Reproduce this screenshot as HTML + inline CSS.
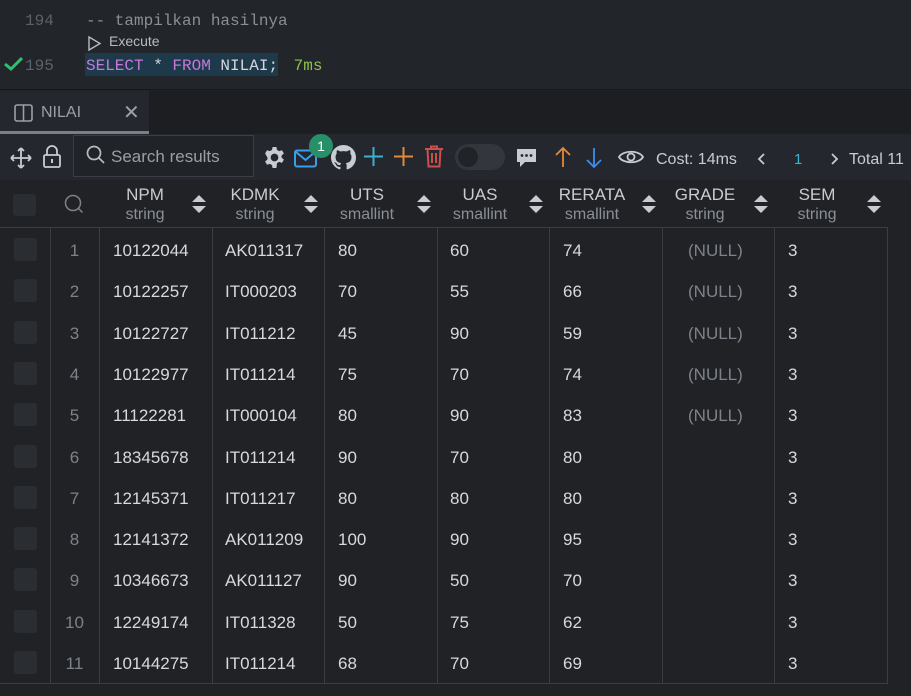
<!DOCTYPE html>
<html><head><meta charset="utf-8"><style>
*{margin:0;padding:0;box-sizing:border-box}
body{width:911px;height:696px;overflow:hidden;background:#202226;font-family:"Liberation Sans",sans-serif;position:relative;color:#d4d7dc}
.a{position:absolute}
.mono{font-family:"Liberation Mono",monospace;font-size:16px}
.cell{position:absolute;font-size:17px;color:#d6d9de;white-space:nowrap}
.vl{position:absolute;width:1px;background:#3a3d43;top:228px;height:456px}
.hd{position:absolute;text-align:center;line-height:20px}
.hd b{display:block;font-weight:normal;font-size:17px;color:#c8ccd2}
.hd i{display:block;font-style:normal;font-size:16px;color:#8a8f97}
.sort{position:absolute;width:14px;height:18px}
.chk{position:absolute;left:14px;width:23px;height:23px;background:#2a2d32;border-radius:3px}
</style></head><body>
<div class="a" style="left:0;top:0;width:911px;height:90px;background:#22252a;border-bottom:1px solid #16181b"></div>
<div class="a mono" style="left:25px;top:-13px;color:#555a62">193</div>
<div class="a mono" style="left:25px;top:12px;color:#5d626a">194</div>
<div class="a mono" style="left:86px;top:12px;color:#8a8f97">-- tampilkan hasilnya</div>
<svg class="a" style="left:87px;top:35px" width="16" height="17"><path d="M2 2 L13 8.5 L2 15 Z" fill="none" stroke="#b8bcc2" stroke-width="1.4"/></svg>
<div class="a" style="left:109px;top:33px;font-size:14px;color:#b8bcc2">Execute</div>
<svg class="a" style="left:3px;top:56px" width="20" height="16"><path d="M2 8 L8 13 L19 2" fill="none" stroke="#2fbf71" stroke-width="3"/></svg>
<div class="a mono" style="left:25px;top:57px;color:#5d626a">195</div>
<div class="a" style="left:85px;top:53px;width:193px;height:23px;background:#1e3a4a"></div>
<div class="a mono" style="left:86px;top:57px;color:#d4d7dc"><span style="color:#c678dd">SELECT</span> * <span style="color:#c678dd">FROM</span> NILAI; <span style="color:#8bc34a;margin-left:6px">7ms</span></div>
<div class="a" style="left:0;top:91px;width:911px;height:43px;background:#1c1e22"></div>
<div class="a" style="left:0;top:91px;width:149px;height:43px;background:#24272d;border-bottom:3px solid #7a7e85"></div>
<svg class="a" style="left:14px;top:104px" width="20" height="18"><rect x="1" y="1" width="17" height="16" rx="2" fill="none" stroke="#9aa0a8" stroke-width="1.6"/><line x1="9.5" y1="1" x2="9.5" y2="17" stroke="#9aa0a8" stroke-width="1.6"/></svg>
<div class="a" style="left:41px;top:104px;font-size:16px;color:#9aa0a8">NILAI</div>
<div class="a" style="left:123px;top:100px;font-size:20px;color:#9aa0a8">✕</div>
<div class="a" style="left:0;top:134px;width:911px;height:46px;background:#24272d"></div>
<svg class="a" style="left:9px;top:146px" width="24" height="24"><path d="M12 2V22M2 12H22M12 2l-3 3M12 2l3 3M12 22l-3-3M12 22l3-3M2 12l3-3M2 12l3 3M22 12l-3-3M22 12l-3 3" stroke="#c8ccd2" stroke-width="1.8" fill="none"/></svg>
<svg class="a" style="left:42px;top:144px" width="20" height="24"><path d="M5 11V7a5 5 0 0 1 10 0v4" fill="none" stroke="#c8ccd2" stroke-width="1.8"/><rect x="2" y="11" width="16" height="12" rx="1.5" fill="none" stroke="#c8ccd2" stroke-width="1.8"/><rect x="9" y="15" width="2" height="4" fill="#c8ccd2"/></svg>
<div class="a" style="left:73px;top:135px;width:181px;height:42px;border:1px solid #3b3e44;background:#202328"></div>
<svg class="a" style="left:86px;top:145px" width="20" height="20"><circle cx="8" cy="8" r="6.5" fill="none" stroke="#b8bcc2" stroke-width="1.7"/><path d="M13 13l5 5" stroke="#b8bcc2" stroke-width="1.7"/></svg>
<div class="a" style="left:111px;top:147px;font-size:17px;color:#9aa0a8">Search results</div>
<svg class="a" style="left:263px;top:146px" width="23" height="23" viewBox="0 0 24 24"><path fill="#c8ccd2" fill-rule="evenodd" d="M10 1h4l.6 3.1 2.2 1.3 3-1 2 3.4-2.4 2.1v2.2l2.4 2.1-2 3.4-3-1-2.2 1.3L14 23h-4l-.6-3.1-2.2-1.3-3 1-2-3.4 2.4-2.1v-2.2L2.2 7.8l2-3.4 3 1 2.2-1.3zM12 8a4 4 0 1 0 0 8 4 4 0 0 0 0-8z"/></svg>
<svg class="a" style="left:294px;top:149px" width="24" height="20"><rect x="1" y="1.5" width="21" height="16" rx="2" fill="none" stroke="#3a9ee8" stroke-width="2"/><path d="M2 3l9.5 8L21 3" fill="none" stroke="#3a9ee8" stroke-width="2"/></svg>
<div class="a" style="left:309px;top:134px;width:24px;height:24px;border-radius:12px;background:#279068;color:#fff;font-size:14px;text-align:center;line-height:24px">1</div>
<svg class="a" style="left:331px;top:145px" width="25" height="25" viewBox="0 0 16 16"><path fill="#c8ccd2" d="M8 0C3.58 0 0 3.58 0 8c0 3.54 2.29 6.53 5.47 7.59.4.07.55-.17.55-.38v-1.33c-2.23.48-2.7-1.07-2.7-1.07-.36-.92-.89-1.17-.89-1.17-.73-.5.06-.49.06-.49.8.06 1.23.83 1.23.83.72 1.22 1.87.87 2.33.66.07-.52.28-.87.5-1.07-1.78-.2-3.64-.89-3.64-3.95 0-.87.31-1.59.82-2.15-.08-.2-.36-1.02.08-2.12 0 0 .67-.21 2.2.82a7.6 7.6 0 0 1 4 0c1.53-1.04 2.2-.82 2.2-.82.44 1.1.16 1.92.08 2.12.51.56.82 1.27.82 2.15 0 3.07-1.87 3.75-3.65 3.95.29.25.54.73.54 1.48v2.2c0 .21.15.46.55.38A8.01 8.01 0 0 0 16 8c0-4.42-3.58-8-8-8z"/></svg>
<svg class="a" style="left:363px;top:146px" width="21" height="21"><path d="M10.5 1V20M1 10.5H20" stroke="#3bb0d0" stroke-width="2"/></svg>
<svg class="a" style="left:393px;top:146px" width="21" height="21"><path d="M10.5 1V20M1 10.5H20" stroke="#e08a3c" stroke-width="2"/></svg>
<svg class="a" style="left:424px;top:145px" width="20" height="23"><path d="M1 4H19M7 4V1.5h6V4M3.5 4l1 17.5h11l1-17.5M8 8v10M12 8v10" fill="none" stroke="#c9504d" stroke-width="2"/></svg>
<div class="a" style="left:455px;top:144px;width:50px;height:26px;border-radius:13px;background:#33363c"></div>
<div class="a" style="left:458px;top:147px;width:20px;height:20px;border-radius:10px;background:#202328"></div>
<svg class="a" style="left:516px;top:148px" width="21" height="20"><path d="M1 1H20V14H9L4 19V14H1Z" fill="#c8ccd2"/><circle cx="6" cy="7.5" r="1.4" fill="#24272d"/><circle cx="10.5" cy="7.5" r="1.4" fill="#24272d"/><circle cx="15" cy="7.5" r="1.4" fill="#24272d"/></svg>
<svg class="a" style="left:553px;top:146px" width="20" height="22"><path d="M10 2V21M3 9l7-7 7 7" fill="none" stroke="#e08a3c" stroke-width="1.8"/></svg>
<svg class="a" style="left:584px;top:147px" width="20" height="22"><path d="M10 1V20M3 13l7 7 7-7" fill="none" stroke="#3a8ef0" stroke-width="1.8"/></svg>
<svg class="a" style="left:618px;top:148px" width="26" height="18"><path d="M1 9C5 2 21 2 25 9C21 16 5 16 1 9Z" fill="none" stroke="#c8ccd2" stroke-width="1.8"/><circle cx="13" cy="9" r="3.5" fill="none" stroke="#c8ccd2" stroke-width="1.8"/></svg>
<div class="a" style="left:656px;top:151px;font-size:16px;color:#c8ccd2">Cost: 14ms</div>
<svg class="a" style="left:757px;top:152px" width="10" height="14"><path d="M7 2L2 7l5 5" fill="none" stroke="#c8ccd2" stroke-width="1.8"/></svg>
<div class="a" style="left:794px;top:151px;font-size:15px;color:#3bb0d0">1</div>
<svg class="a" style="left:829px;top:152px" width="10" height="14"><path d="M3 2l5 5-5 5" fill="none" stroke="#c8ccd2" stroke-width="1.8"/></svg>
<div class="a" style="left:849px;top:151px;font-size:16px;color:#c8ccd2">Total 11</div>
<div class="a" style="left:0;top:180px;width:911px;height:48px;background:#202226"></div>
<div class="a" style="left:13px;top:194px;width:23px;height:22px;background:#2a2d32;border-radius:3px"></div>
<svg class="a" style="left:64px;top:194px" width="20" height="20"><circle cx="9" cy="9" r="7.5" fill="none" stroke="#7d828a" stroke-width="1.5"/><path d="M14 14l4.5 4.5" stroke="#7d828a" stroke-width="1.5"/></svg>
<div class="a" style="left:0;top:227px;width:888px;height:1px;background:#3a3d43"></div>
<div class="a" style="left:0;top:683px;width:888px;height:1px;background:#3a3d43"></div>
<div class="vl" style="left:50px"></div><div class="vl" style="left:99px"></div><div class="vl" style="left:212px"></div><div class="vl" style="left:324px"></div><div class="vl" style="left:437px"></div><div class="vl" style="left:549px"></div><div class="vl" style="left:662px"></div><div class="vl" style="left:774px"></div><div class="vl" style="left:887px"></div>
<div class="hd" style="left:100px;top:185px;width:90px"><b>NPM</b><i>string</i></div>
<div class="hd" style="left:212px;top:185px;width:86px"><b>KDMK</b><i>string</i></div>
<div class="hd" style="left:324px;top:185px;width:86px"><b>UTS</b><i>smallint</i></div>
<div class="hd" style="left:437px;top:185px;width:86px"><b>UAS</b><i>smallint</i></div>
<div class="hd" style="left:549px;top:185px;width:86px"><b>RERATA</b><i>smallint</i></div>
<div class="hd" style="left:662px;top:185px;width:86px"><b>GRADE</b><i>string</i></div>
<div class="hd" style="left:774px;top:185px;width:86px"><b>SEM</b><i>string</i></div>
<svg width="0" height="0" style="position:absolute"><defs><g id="s"><path d="M0 7L7 0L14 7Z M0 11L14 11L7 18Z" fill="#c8ccd2"/></g></defs></svg>
<svg class="sort" style="left:192px;top:195px"><use href="#s"/></svg>
<svg class="sort" style="left:304px;top:195px"><use href="#s"/></svg>
<svg class="sort" style="left:417px;top:195px"><use href="#s"/></svg>
<svg class="sort" style="left:529px;top:195px"><use href="#s"/></svg>
<svg class="sort" style="left:642px;top:195px"><use href="#s"/></svg>
<svg class="sort" style="left:754px;top:195px"><use href="#s"/></svg>
<svg class="sort" style="left:867px;top:195px"><use href="#s"/></svg>
<div id="rows"></div>
<script>
var d=[["10122044","AK011317",80,60,74,1],["10122257","IT000203",70,55,66,1],["10122727","IT011212",45,90,59,1],["10122977","IT011214",75,70,74,1],["11122281","IT000104",80,90,83,1],["18345678","IT011214",90,70,80,0],["12145371","IT011217",80,80,80,0],["12141372","AK011209",100,90,95,0],["10346673","AK011127",90,50,70,0],["12249174","IT011328",50,75,62,0],["10144275","IT011214",68,70,69,0]];
var h="";
for(var i=0;i<d.length;i++){var y=241+i*41.3;var r=d[i];
h+='<div class="chk" style="top:'+(y-3)+'px"></div>';
h+='<div class="cell" style="left:50px;width:49px;text-align:center;color:#7d828a;top:'+y+'px">'+(i+1)+'</div>';
h+='<div class="cell" style="left:113px;top:'+y+'px">'+r[0]+'</div>';
h+='<div class="cell" style="left:225px;top:'+y+'px">'+r[1]+'</div>';
h+='<div class="cell" style="left:338px;top:'+y+'px">'+r[2]+'</div>';
h+='<div class="cell" style="left:450px;top:'+y+'px">'+r[3]+'</div>';
h+='<div class="cell" style="left:563px;top:'+y+'px">'+r[4]+'</div>';
if(r[5])h+='<div class="cell" style="left:688px;color:#7d828a;top:'+y+'px">(NULL)</div>';
h+='<div class="cell" style="left:788px;top:'+y+'px">3</div>';}
document.getElementById("rows").innerHTML=h;
</script>
</body></html>
